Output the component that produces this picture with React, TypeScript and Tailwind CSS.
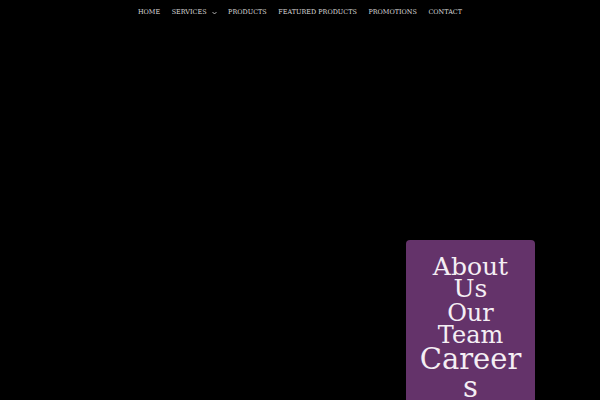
import type { FC } from "react";

const links = ["HOME", "SERVICES", "PRODUCTS", "FEATURED PRODUCTS", "PROMOTIONS", "CONTACT"];

const Chevron: FC = () => (
  <svg width="5" height="4" viewBox="0 0 10 6" className="ml-[5px] mt-[1px]">
    <path d="M1 1l4 4 4-4" fill="none" stroke="#d8d8d8" strokeWidth="1.6" />
  </svg>
);

const App: FC = () => {
  return (
    <div
      className="w-[600px] h-[400px] bg-black overflow-hidden"
      style={{ fontFamily: '"DejaVu Serif", serif' }}
    >
      <nav className="h-[25px] flex items-center justify-center">
        <ul className="flex items-center gap-[11.5px] text-[6.45px] text-[#dcdcdc] leading-none">
          {links.map((l) => (
            <li key={l} className="flex items-center">
              {l}
              {l === "SERVICES" && <Chevron />}
            </li>
          ))}
        </ul>
      </nav>
      <div className="flex justify-end pr-[65px] pt-[215px]">
        <div className="w-[129px] h-[200px] bg-[#64336a] rounded-[4px] pt-[16px] text-center text-[#f4eef4]">
          <p className="text-[25px] leading-[22px]">About<br />Us</p>
          <p className="text-[24px] leading-[22px] mt-[2px]">Our<br />Team</p>
          <p className="text-[29px] leading-[28px] -mt-[1px]">Career<br />s</p>
        </div>
      </div>
    </div>
  );
};

export default App;
